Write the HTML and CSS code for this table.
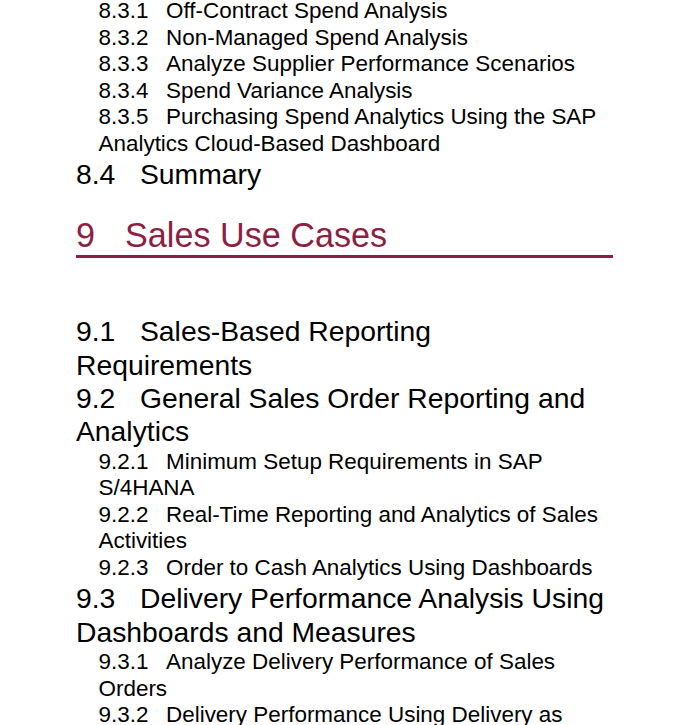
FILE: index.html
```html
<!DOCTYPE html>
<html lang="en">
<head>
<meta charset="utf-8">
<title>Contents</title>
<link rel="stylesheet" href="styles.css">
</head>
<body>
<div class="toc">
  <div class="l3"><span class="num">8.3.1</span>Off-Contract Spend Analysis</div>
  <div class="l3"><span class="num">8.3.2</span>Non-Managed Spend Analysis</div>
  <div class="l3"><span class="num">8.3.3</span>Analyze Supplier Performance Scenarios</div>
  <div class="l3"><span class="num">8.3.4</span>Spend Variance Analysis</div>
  <div class="l3"><span class="num">8.3.5</span>Purchasing Spend Analytics Using the SAP Analytics Cloud-Based Dashboard</div>
  <div class="l2"><span class="num">8.4</span>Summary</div>

  <h1 class="l1"><span class="num">9</span>Sales Use Cases</h1>

  <div class="l2"><span class="num">9.1</span>Sales-Based Reporting Requirements</div>
  <div class="l2"><span class="num">9.2</span>General Sales Order Reporting and Analytics</div>
  <div class="l3"><span class="num">9.2.1</span>Minimum Setup Requirements in SAP S/4HANA</div>
  <div class="l3"><span class="num">9.2.2</span>Real-Time Reporting and Analytics of Sales Activities</div>
  <div class="l3"><span class="num">9.2.3</span>Order to Cash Analytics Using Dashboards</div>
  <div class="l2"><span class="num">9.3</span>Delivery Performance Analysis Using Dashboards and Measures</div>
  <div class="l3"><span class="num">9.3.1</span>Analyze Delivery Performance of Sales Orders</div>
  <div class="l3"><span class="num">9.3.2</span>Delivery Performance Using Delivery as</div>
</div>
</body>
</html>
```

FILE: styles.css
```css
html, body {
  margin: 0;
  padding: 0;
  background: #ffffff;
}

body {
  font-family: "Liberation Sans", Arial, sans-serif;
  color: #000000;
}

.toc {
  margin: -1.8px 0 0 76px;
  width: 537px;
}

.num {
  display: inline-block;
}

.l3 {
  font-size: 22.45px;
  line-height: 26.5px;
  padding-left: 22.5px;
  padding-right: 5px;
}

.l3 .num {
  width: 67.5px;
}

.l2 {
  font-size: 28.3px;
  line-height: 33.4px;
  padding-right: 5px;
}

.l3 + .l2 {
  margin-top: 1px;
}

.l2 .num {
  width: 64px;
}

.l1 {
  margin: 24.4px 0 57.2px 0;
  padding-bottom: 0;
  font-size: 34.2px;
  line-height: 39px;
  font-weight: normal;
  color: #8c1f42;
  border-bottom: 3px solid #8c1f42;
}

.l1 .num {
  width: 49px;
}
```
